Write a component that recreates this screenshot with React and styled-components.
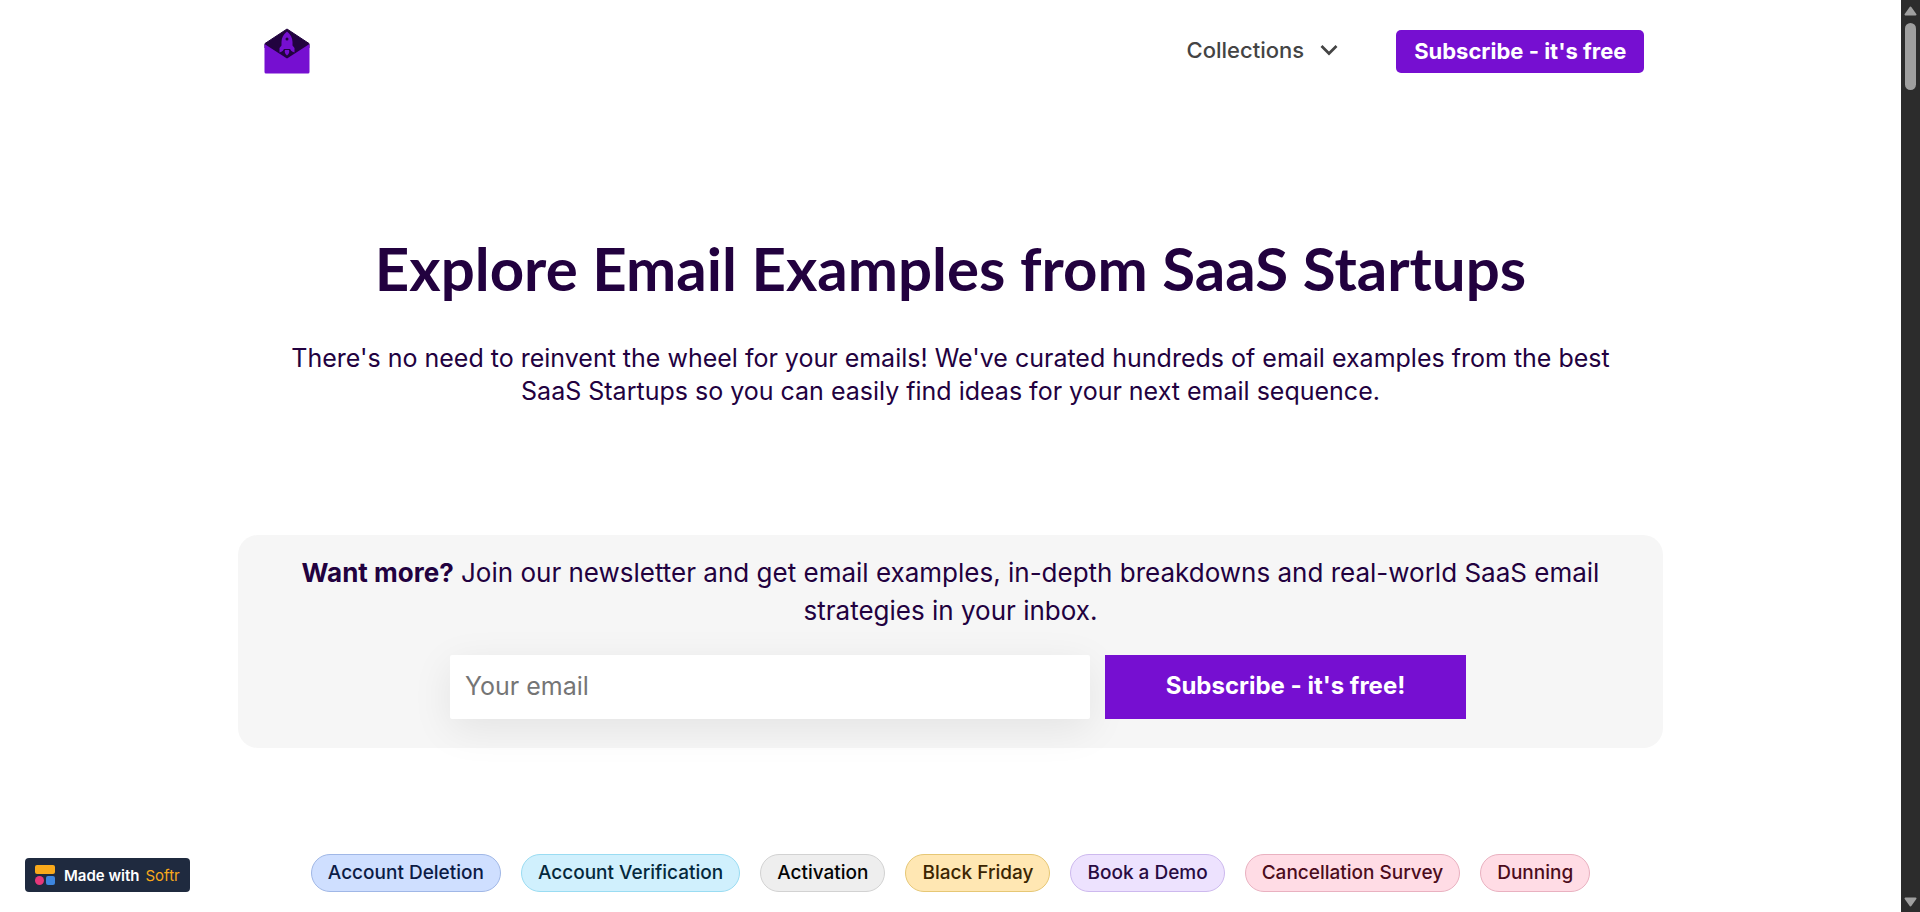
import React, { useState } from 'react';
import styled, { createGlobalStyle } from 'styled-components';

const PURPLE = "#760fd1";
const DARK_PURPLE = "#22013f";

const CATEGORIES = [
    { name: "Account Deletion", color: "#0b1b45", background: "#cfdfff", border: "#a0b7e6" },
    { name: "Account Verification", color: "#04283c", background: "#d0f0fd", border: "#9adcf2" },
    { name: "Activation", color: "#040404", background: "#eeeeee", border: "#d2d2d2" },
    { name: "Black Friday", color: "#3b2501", background: "#ffe7b3", border: "#e6c775" },
    { name: "Book a Demo", color: "#280b42", background: "#ede2fe", border: "#cdb9ee" },
    { name: "Cancellation Survey", color: "#4c0c1c", background: "#ffdce5", border: "#e9b1c0" },
    { name: "Dunning", color: "#4c0c1c", background: "#ffdce5", border: "#e9b1c0" },
];

const GlobalStyle = createGlobalStyle`
    body {
        margin: 0;
        background-color: white;
        font-family: Inter, "Liberation Sans", sans-serif;
        color: ${DARK_PURPLE};
    }

    *, *::before, *::after {
        box-sizing: border-box;
    }

    button, input {
        font-family: inherit;
    }
`;

const Window = styled.div`
    display: flex;
    height: 100vh;
    overflow: hidden;
`;

const Page = styled.div`
    flex: 1;
    min-width: 0;
    height: 100%;
    overflow: hidden;
`;

const Header = styled.header`
    width: 73%;
    margin: 0 auto;
    padding: 28px 0 27px;
    display: flex;
    align-items: center;
    justify-content: space-between;
`;

const LogoLink = styled.a`
    display: flex;
    padding-left: 7px;
`;

const Nav = styled.nav`
    display: flex;
    align-items: center;
    gap: 58px;
`;

const MenuButton = styled.button`
    display: flex;
    align-items: center;
    gap: 16px;
    padding: 0 0 2px;
    border: none;
    background: none;
    color: #444444;
    font-size: 22px;
    font-weight: 500;
    line-height: 26px;
    cursor: pointer;
`;

const HeaderButton = styled.button`
    height: 43px;
    padding: 0 18px;
    border: none;
    border-radius: 5px;
    background-color: ${PURPLE};
    color: white;
    font-size: 22px;
    font-weight: 700;
    cursor: pointer;
`;

const Hero = styled.section`
    width: 73%;
    margin: 0 auto;
    padding: 131px 20px 127px;
    text-align: center;
`;

const Title = styled.h1`
    margin: 0 0 38px;
    font-family: Lato, sans-serif;
    font-size: 60px;
    font-weight: 700;
    line-height: 72px;
`;

const Subtitle = styled.p`
    margin: 0;
    font-size: 25px;
    line-height: 33px;
`;

const Newsletter = styled.section`
    width: 75%;
    margin: 0 auto;
    padding: 19px 60px 29px;
    border-radius: 20px;
    background-color: #f6f6f6;
`;

const NewsletterText = styled.p`
    margin: 0 0 25px;
    font-size: 26px;
    line-height: 38px;
    text-align: center;
`;

const Form = styled.form`
    display: flex;
    justify-content: center;
    gap: 15px;
    padding-left: 15px;
`;

const EmailInput = styled.input`
    flex: 0 1 640px;
    min-width: 0;
    height: 64px;
    padding: 0 15px 3px;
    border: none;
    border-radius: 2px;
    background-color: white;
    box-shadow: 0 10px 40px rgba(0, 0, 0, 0.08);
    color: ${DARK_PURPLE};
    font-size: 25px;

    &::placeholder {
        color: #757575;
    }
`;

const SubmitButton = styled.button`
    flex: 0 0 361px;
    height: 64px;
    padding: 0 0 3px;
    border: none;
    background-color: ${PURPLE};
    color: white;
    font-size: 24px;
    font-weight: 700;
    cursor: pointer;
`;

const Categories = styled.nav`
    display: flex;
    justify-content: center;
    gap: 20px;
    margin-top: 106px;
`;

const Category = styled.a`
    padding: 0 16px;
    border: 1px solid ${(props) => props.$border};
    border-radius: 19px;
    background-color: ${(props) => props.$background};
    color: ${(props) => props.$color};
    font-size: 19px;
    font-weight: 500;
    line-height: 36px;
    text-decoration: none;
    white-space: nowrap;
`;

const SoftrBadge = styled.a`
    position: fixed;
    left: 25px;
    bottom: 20px;
    height: 34px;
    padding: 0 10px;
    display: flex;
    align-items: center;
    border-radius: 4px;
    background-color: #1f2a3f;
    color: white;
    font-size: 15px;
    font-weight: 600;
    text-decoration: none;

    svg {
        margin-right: 9px;
    }
`;

const SoftrName = styled.span`
    margin-left: 6px;
    color: #f9a91b;
    font-weight: 400;
`;

const ScrollBar = styled.div`
    flex: 0 0 19px;
    display: flex;
    flex-direction: column;
    align-items: center;
    justify-content: space-between;
    padding: 6px 0 5px;
    background-color: #2c2c2c;
`;

const ScrollTop = styled.div`
    display: flex;
    flex-direction: column;
    align-items: center;
    gap: 7px;
`;

const ScrollThumb = styled.div`
    width: 11px;
    height: 67px;
    border-radius: 6px;
    background-color: #9f9f9f;
`;

const Logo = () => (
    <svg width="46" height="46" viewBox="0 0 46 46" aria-hidden="true">
        <path d="M1 15.5 L23 1 L45 15.5 V20 L23 33 L1 20Z" fill="#22033f" stroke="#22033f" strokeLinejoin="round" />
        <path d="M0.5 16 L23 30.5 L45.5 16 V44 Q45.5 45.5 44 45.5 H2 Q0.5 45.5 0.5 44Z" fill={PURPLE} />
        <path
            d="M23 3.5 C19.5 6 17.5 10 17.5 14 V17.5 L15.5 20 V24.5 L19 23 H27 L30.5 24.5 V20 L28.5 17.5 V14 C28.5 10 26.5 6 23 3.5Z"
            fill={PURPLE}
        />
        <circle cx="23" cy="11" r="1.5" fill="#22033f" />
        <path d="M20 21 H26 L28 24 Q27.5 27 23 30 Q18.5 27 18 24Z" fill="#22033f" />
        <path d="M21 22 H25 Q26 25 23 27.5 Q20 25 21 22Z" fill={PURPLE} />
    </svg>
);

const Chevron = () => (
    <svg width="18" height="12" viewBox="0 0 18 12" aria-hidden="true">
        <path d="M1.5 2 L9 9.5 L16.5 2" fill="none" stroke="#444444" strokeWidth="2.7" />
    </svg>
);

const SoftrLogo = () => (
    <svg width="20" height="20" viewBox="0 0 20 20" aria-hidden="true">
        <rect width="20" height="9" rx="2" fill="#f9a91b" />
        <circle cx="4.5" cy="15.5" r="4.5" fill="#e6377a" />
        <rect x="11" y="11" width="9" height="9" rx="2" fill="#3d86e0" />
    </svg>
);

const Arrow = ({ down }) => (
    <svg width="13" height="10" viewBox="0 0 13 10" aria-hidden="true">
        <path
            d={down ? "M1.5 1.5 H11.5 L6.5 8.5Z" : "M1.5 8.5 H11.5 L6.5 1.5Z"}
            fill="#9f9f9f"
            stroke="#9f9f9f"
            strokeWidth="2"
            strokeLinejoin="round"
        />
    </svg>
);

const App = () =>
{
    const [email, setEmail] = useState("");

    return (
        <>
            <GlobalStyle />
            <Window>
                <Page>
                    <Header>
                        <LogoLink href="#" aria-label="Home">
                            <Logo />
                        </LogoLink>
                        <Nav>
                            <MenuButton type="button">
                                Collections
                                <Chevron />
                            </MenuButton>
                            <HeaderButton type="button">Subscribe - it's free</HeaderButton>
                        </Nav>
                    </Header>
                    <main>
                        <Hero>
                            <Title>Explore Email Examples from SaaS Startups</Title>
                            <Subtitle>
                                There's no need to reinvent the wheel for your emails! We've
                                curated hundreds of email examples from the best SaaS Startups
                                so you can easily find ideas for your next email sequence.
                            </Subtitle>
                        </Hero>
                        <Newsletter>
                            <NewsletterText>
                                <strong>Want more?</strong> Join our newsletter and get email
                                examples, in-depth breakdowns and real-world SaaS email
                                strategies in your inbox.
                            </NewsletterText>
                            <Form onSubmit={(e) => e.preventDefault()}>
                                <EmailInput
                                    type="email"
                                    aria-label="Your email"
                                    placeholder="Your email"
                                    value={email}
                                    onChange={(e) => setEmail(e.target.value)}
                                />
                                <SubmitButton type="submit">Subscribe - it's free!</SubmitButton>
                            </Form>
                        </Newsletter>
                        <Categories aria-label="Categories">
                            {CATEGORIES.map((category) => (
                                <Category
                                    key={category.name}
                                    href="#"
                                    $color={category.color}
                                    $background={category.background}
                                    $border={category.border}
                                >
                                    {category.name}
                                </Category>
                            ))}
                        </Categories>
                    </main>
                </Page>
                <ScrollBar aria-hidden="true">
                    <ScrollTop>
                        <Arrow />
                        <ScrollThumb />
                    </ScrollTop>
                    <Arrow down />
                </ScrollBar>
            </Window>
            <SoftrBadge href="#">
                <SoftrLogo />
                Made with
                <SoftrName>Softr</SoftrName>
            </SoftrBadge>
        </>
    );
}

export default App;
